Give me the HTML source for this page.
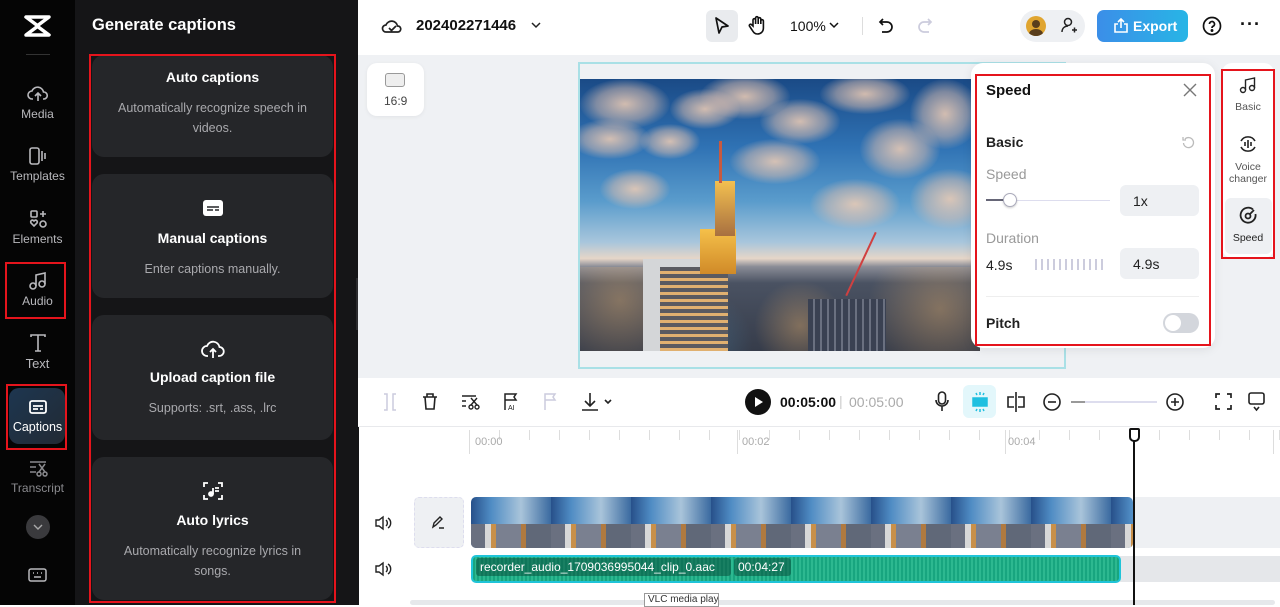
<!DOCTYPE html><html><head><meta charset="utf-8"><style>
*{box-sizing:border-box;margin:0;padding:0}
body{width:1280px;height:605px;overflow:hidden;font-family:"Liberation Sans",sans-serif;background:#fff;position:relative}
.a{position:absolute}
.lb{left:0;top:0;width:75px;height:605px;background:#050505}
.ni{position:absolute;left:0;width:75px;text-align:center;color:#b9b9bd;font-size:12px}
.ni svg{display:block;margin:0 auto 3px}
.pn{left:75px;top:0;width:284px;height:605px;background:#151517}
.card{position:absolute;left:92px;width:241px;background:#252629;border-radius:12px;color:#fff;text-align:center}
.card b{display:block;font-size:14px}
.card p{color:#a9a9ad;font-size:12.5px;line-height:20px;margin-top:8px}
.red{position:absolute;border:2px solid #e5141c}
.top{left:358px;top:0;width:922px;height:55px;background:#fff}
.cv{left:358px;top:55px;width:922px;height:323px;background:#eff1f4}
.tb{left:358px;top:378px;width:922px;height:49px;background:#fff;border-bottom:1px solid #e8e9ec}
svg{overflow:visible}
.cl{position:absolute;border-radius:50%;background:radial-gradient(ellipse,rgba(240,205,180,.85) 0,rgba(220,190,175,.5) 45%,transparent 72%)}
</style></head><body>
<div class="a lb"></div>
<svg class="a" style="left:24px;top:14px" width="27" height="24" viewBox="0 0 27 24"><path d="M2 3h23L13 12 25 21H2L14 12Z" fill="none" stroke="#fff" stroke-width="3.5" stroke-linejoin="round"/></svg>
<div class="a" style="left:26px;top:54px;width:24px;height:1px;background:#333"></div>
<div class="ni" style="top:84px"><svg width="22" height="20" viewBox="0 0 22 20" fill="none" stroke="#b9b9bd" stroke-width="1.6"><path d="M6 15H5a4 4 0 0 1 0-8 6 6 0 0 1 11.5 1A3.5 3.5 0 0 1 17 15h-1M11 17V10M8 12l3-3 3 3"/></svg>Media</div>
<div class="ni" style="top:146px"><svg width="22" height="20" viewBox="0 0 22 20" fill="none" stroke="#b9b9bd" stroke-width="1.6"><rect x="3" y="2" width="9" height="16" rx="2"/><path d="M15 5v10M18 7v6"/></svg>Templates</div>
<div class="ni" style="top:209px"><svg width="22" height="20" viewBox="0 0 22 20" fill="none" stroke="#b9b9bd" stroke-width="1.6"><rect x="4" y="2" width="6" height="6" rx="1"/><path d="M16 2v6M13 5h6M7 12c-2-2-4 0-3 2l3 3 3-3c1-2-1-4-3-2z"/><circle cx="16" cy="15" r="3"/></svg>Elements</div>
<div class="ni" style="top:271px"><svg width="22" height="20" viewBox="0 0 22 20" fill="none" stroke="#b9b9bd" stroke-width="1.6"><circle cx="6" cy="15" r="3"/><circle cx="15" cy="13" r="3"/><path d="M9 15V4l9-2v11"/></svg>Audio</div>
<div class="red" style="left:5px;top:262px;width:61px;height:57px"></div>
<div class="ni" style="top:333px;font-size:13px"><svg width="22" height="20" viewBox="0 0 22 20" fill="none" stroke="#b9b9bd" stroke-width="1.6"><path d="M4 4V2h14v2M11 2v16M8 18h6"/></svg>Text</div>
<div class="a" style="left:9px;top:388px;width:56px;height:56px;border-radius:10px;background:linear-gradient(135deg,#1d3650,#222a34)"></div>
<div class="ni" style="top:397px;color:#fff;font-size:12.5px"><svg width="22" height="20" viewBox="0 0 22 20" fill="none" stroke="#fff" stroke-width="1.8"><rect x="3" y="4" width="16" height="12" rx="2"/><path d="M6 9h10M6 12h5M13 12h3"/></svg>Captions</div>
<div class="red" style="left:6px;top:384px;width:61px;height:66px"></div>
<div class="ni" style="top:458px;color:#8a8a8e"><svg width="22" height="20" viewBox="0 0 22 20" fill="none" stroke="#8a8a8e" stroke-width="1.5"><path d="M3 4h16M3 9h6M3 14h6M12 6l6 8M18 6l-6 8"/><circle cx="12" cy="16" r="2"/><circle cx="18" cy="16" r="2"/></svg>Transcript</div>
<div class="a" style="left:26px;top:515px;width:24px;height:24px;border-radius:50%;background:#3a3a3d"></div>
<svg class="a" style="left:33px;top:524px" width="10" height="6"><path d="M1 1l4 4 4-4" stroke="#aaa" fill="none" stroke-width="1.4"/></svg>
<svg class="a" style="left:28px;top:568px" width="19" height="15" fill="none" stroke="#b9b9bd" stroke-width="1.5"><rect x="1" y="1" width="17" height="12" rx="2"/><path d="M5 5h1M9 5h1M13 5h1M6 9h7"/></svg>

<div class="a pn"></div>
<div class="a" style="left:92px;top:16px;color:#fff;font-size:16.5px;font-weight:bold">Generate captions</div>
<div class="card" style="top:55px;height:102px;padding-top:14px"><b>Auto captions</b><p style="margin-top:13px">Automatically recognize speech in<br>videos.</p></div>
<div class="card" style="top:174px;height:124px;padding-top:26px"><svg width="22" height="16" viewBox="0 0 22 16" style="display:block;margin:0 auto 14px"><rect x="1" y="0" width="20" height="16" rx="3" fill="#fff"/><path d="M5 7h12M5 10h6M13 10h4" stroke="#252629" stroke-width="1.6"/></svg><b>Manual captions</b><p style="margin-top:13px">Enter captions manually.</p></div>
<div class="card" style="top:315px;height:125px;padding-top:24px"><svg width="24" height="20" viewBox="0 0 24 20" fill="none" stroke="#fff" stroke-width="1.8" style="display:block;margin:0 auto 10px"><path d="M7 17H6a5 5 0 0 1 0-10 6.5 6.5 0 0 1 12.5 1A4.5 4.5 0 0 1 18 17h-1M12 19v-9M9 13l3-3 3 3"/></svg><b>Upload caption file</b><p style="margin-top:13px">Supports: .srt, .ass, .lrc</p></div>
<div class="card" style="top:457px;height:143px;padding-top:23px"><svg width="22" height="22" viewBox="0 0 22 22" fill="none" stroke="#fff" stroke-width="1.8" style="display:block;margin:0 auto 10px"><path d="M2 7V3h4M16 3h4v4M20 15v4h-4M6 19H2v-4M11 8v6M13 8h4M13 11h4"/><circle cx="9" cy="14" r="2" fill="#fff"/></svg><b>Auto lyrics</b><p style="margin-top:13px">Automatically recognize lyrics in<br>songs.</p></div>
<div class="red" style="left:89px;top:54px;width:247px;height:549px"></div>
<div class="a" style="left:356px;top:278px;width:10px;height:52px;border-radius:0 6px 6px 0;background:#2b2b2e"></div>

<div class="a top"></div>
<svg class="a" style="left:382px;top:17px" width="20" height="18" fill="none" stroke="#222" stroke-width="1.7"><path d="M5 15H4a3.5 3.5 0 0 1 0-7 6 6 0 0 1 11.5 1A3 3 0 0 1 16 15zM7 11l2.5 2.5L14 9"/></svg>
<div class="a" style="left:416px;top:17px;font-size:15px;font-weight:bold;color:#111">202402271446</div>
<svg class="a" style="left:531px;top:22px" width="10" height="6"><path d="M1 1l4 4 4-4" stroke="#222" fill="none" stroke-width="1.5"/></svg>
<div class="a" style="left:706px;top:10px;width:32px;height:32px;border-radius:6px;background:#e9ebee"></div>
<svg class="a" style="left:714px;top:16px" width="16" height="20" fill="none" stroke="#111" stroke-width="1.7"><path d="M2 2l12 8-6 1-3 6z" stroke-linejoin="round"/></svg>
<svg class="a" style="left:748px;top:15px" width="18" height="20" fill="none" stroke="#111" stroke-width="1.6"><path d="M5 11V5a1.3 1.3 0 0 1 2.6 0v4V3a1.3 1.3 0 0 1 2.6 0v6V4a1.3 1.3 0 0 1 2.6 0v5V6a1.3 1.3 0 0 1 2.6 0v7c0 4-3 6-6 6s-4-2-6-5l-2-3a1.3 1.3 0 0 1 2-1.5z"/></svg>
<div class="a" style="left:790px;top:18px;font-size:14px;color:#111">100%</div>
<svg class="a" style="left:829px;top:22px" width="10" height="6"><path d="M1 1l4 4 4-4" stroke="#111" fill="none" stroke-width="1.5"/></svg>
<div class="a" style="left:862px;top:17px;width:1px;height:18px;background:#ddd"></div>
<svg class="a" style="left:878px;top:17px" width="16" height="18" fill="none" stroke="#111" stroke-width="1.7"><path d="M5 2L2 5l3 3M2 5h7a5 5 0 0 1 0 10H4"/></svg>
<svg class="a" style="left:917px;top:17px" width="16" height="18" fill="none" stroke="#ccd" stroke-width="1.7"><path d="M11 2l3 3-3 3M14 5H7a5 5 0 0 0 0 10h5"/></svg>
<div class="a" style="left:1020px;top:10px;width:65px;height:32px;border-radius:16px;background:#eef0f3"></div>
<div class="a" style="left:1026px;top:16px;width:20px;height:20px;border-radius:50%;background:#e0a530;overflow:hidden"><div class="a" style="left:6px;top:4px;width:8px;height:8px;border-radius:50%;background:#5a3e1c"></div><div class="a" style="left:3px;top:13px;width:14px;height:10px;border-radius:50%;background:#5a3e1c"></div></div>
<svg class="a" style="left:1061px;top:17px" width="17" height="17" fill="none" stroke="#222" stroke-width="1.5"><circle cx="7" cy="5" r="3.5"/><path d="M1 15c0-4 3-6 6-6M11 13h5M13.5 10.5v5"/></svg>
<div class="a" style="left:1097px;top:10px;width:91px;height:32px;border-radius:7px;background:linear-gradient(90deg,#3b8ee8,#28b5e6);color:#fff;font-size:14px;font-weight:bold;padding:8px 0 0 36px">Export</div>
<svg class="a" style="left:1114px;top:18px" width="14" height="15" fill="none" stroke="#fff" stroke-width="1.6"><path d="M4 6H1v8h12V6h-3M7 10V1M4 4l3-3 3 3"/></svg>
<svg class="a" style="left:1202px;top:16px" width="20" height="20" fill="none" stroke="#111" stroke-width="1.7"><circle cx="10" cy="10" r="8.5"/><path d="M7.5 8a2.5 2.5 0 1 1 3.5 2.3c-.8.4-1 .9-1 1.7"/><circle cx="10" cy="14.5" r=".6" fill="#111"/></svg>
<div class="a" style="left:1240px;top:14px;font-size:18px;font-weight:bold;color:#111;letter-spacing:1px">···</div>

<div class="a cv"></div>
<div class="a" style="left:367px;top:63px;width:57px;height:53px;border-radius:10px;background:#fff;box-shadow:0 1px 4px rgba(0,0,0,.06)"></div>
<div class="a" style="left:385px;top:73px;width:20px;height:14px;border:1.5px solid #999;border-radius:3px;background:#eee"></div>
<div class="a" style="left:384px;top:94px;font-size:12px;color:#444">16:9</div>
<div class="a" style="left:578px;top:62px;width:488px;height:307px;border:2px solid #a9e0e6"></div>
<div class="a" style="left:580px;top:79px;width:400px;height:272px;overflow:hidden;background:linear-gradient(180deg,#1a4a86 0%,#2f72b4 25%,#5a9ccc 45%,#a8c6dc 60%,#e6d6c8 66%,#8a8c96 69%,#4a5262 75%,#363c4a 100%)">
<div class="cl" style="left:0;top:0;width:90px;height:50px"></div>
<div class="cl" style="left:-10px;top:40px;width:80px;height:40px"></div>
<div class="cl" style="left:90px;top:10px;width:70px;height:40px"></div>
<div class="cl" style="left:120px;top:-5px;width:90px;height:45px"></div>
<div class="cl" style="left:180px;top:20px;width:80px;height:45px"></div>
<div class="cl" style="left:240px;top:-5px;width:90px;height:40px"></div>
<div class="cl" style="left:280px;top:40px;width:80px;height:60px"></div>
<div class="cl" style="left:330px;top:0;width:70px;height:70px"></div>
<div class="cl" style="left:150px;top:60px;width:90px;height:45px"></div>
<div class="cl" style="left:20px;top:90px;width:70px;height:40px"></div>
<div class="cl" style="left:230px;top:100px;width:90px;height:50px"></div>
<div class="cl" style="left:330px;top:90px;width:80px;height:60px"></div>
<div class="cl" style="left:60px;top:45px;width:60px;height:35px"></div>
<div class="a" style="left:0;top:188px;width:400px;height:84px;background:radial-gradient(circle at 10% 40%,rgba(255,190,110,.35) 0,transparent 20%),radial-gradient(circle at 55% 70%,rgba(255,190,110,.35) 0,transparent 20%),radial-gradient(circle at 90% 50%,rgba(255,190,110,.35) 0,transparent 20%),radial-gradient(circle at 30% 90%,rgba(70,110,140,.6) 0,transparent 18%)"></div>
<div class="a" style="left:63px;top:180px;width:85px;height:92px;background:#d4d6d8"></div>
<div class="a" style="left:80px;top:188px;width:68px;height:84px;background:repeating-linear-gradient(0deg,#e0b070 0 3px,#5a5a60 3px 7px)"></div>
<div class="a" style="left:120px;top:150px;width:36px;height:45px;background:linear-gradient(#f5c04a,#d08a28)"></div>
<div class="a" style="left:135px;top:102px;width:20px;height:55px;background:linear-gradient(#f3c050,#a87040)"></div>
<div class="a" style="left:139px;top:62px;width:3px;height:42px;background:#c85a40"></div>
<div class="a" style="left:228px;top:220px;width:78px;height:52px;background:repeating-linear-gradient(90deg,#3a4152 0 5px,#6a7080 5px 7px)"></div>
<div class="a" style="left:280px;top:150px;width:2px;height:70px;background:#d04040;transform:rotate(25deg)"></div>
</div>

<div class="a" style="left:971px;top:63px;width:244px;height:285px;border-radius:12px;background:#fff;box-shadow:0 2px 10px rgba(0,0,0,.08)"></div>
<div class="red" style="left:975px;top:74px;width:236px;height:272px"></div>
<div class="a" style="left:986px;top:82px;font-size:15px;font-weight:bold;color:#111">Speed</div>
<svg class="a" style="left:1184px;top:84px" width="12" height="12" stroke="#777" stroke-width="1.4"><path d="M0 0l12 12M12 0L0 12"/></svg>
<div class="a" style="left:986px;top:134px;font-size:14px;font-weight:bold;color:#222">Basic</div>
<svg class="a" style="left:1182px;top:136px" width="13" height="13" fill="none" stroke="#bbb" stroke-width="1.3"><path d="M3 3a5 5 0 1 1-1.5 4M1 1v3h3"/></svg>
<div class="a" style="left:986px;top:166px;font-size:14px;color:#999">Speed</div>
<div class="a" style="left:986px;top:200px;width:124px;height:1px;background:#dde"></div>
<div class="a" style="left:986px;top:199px;width:24px;height:2px;background:#667"></div>
<div class="a" style="left:1003px;top:193px;width:14px;height:14px;border-radius:50%;background:#fff;border:1px solid #aab;box-shadow:0 1px 2px rgba(0,0,0,.2)"></div>
<div class="a" style="left:1120px;top:185px;width:79px;height:31px;border-radius:6px;background:#eef0f3;font-size:14px;color:#222;padding:8px 0 0 13px">1x</div>
<div class="a" style="left:986px;top:230px;font-size:14px;color:#999">Duration</div>
<div class="a" style="left:986px;top:257px;font-size:14px;color:#222">4.9s</div>
<div class="a" style="left:1035px;top:259px;width:70px;height:11px;background:repeating-linear-gradient(90deg,#ccd 0 2px,transparent 2px 6px)"></div>
<div class="a" style="left:1120px;top:248px;width:79px;height:31px;border-radius:6px;background:#eef0f3;font-size:14px;color:#222;padding:8px 0 0 13px">4.9s</div>
<div class="a" style="left:986px;top:296px;width:213px;height:1px;background:#eee"></div>
<div class="a" style="left:986px;top:315px;font-size:14px;font-weight:bold;color:#222">Pitch</div>
<div class="a" style="left:1163px;top:313px;width:36px;height:20px;border-radius:10px;background:#d3d6dc"></div>
<div class="a" style="left:1165px;top:315px;width:16px;height:16px;border-radius:50%;background:#fff"></div>

<div class="a" style="left:1222px;top:63px;width:52px;height:195px;border-radius:10px;background:#fff"></div>
<div class="a" style="left:1225px;top:198px;width:47px;height:56px;border-radius:6px;background:#eef0f3"></div>
<svg class="a" style="left:1239px;top:77px" width="18" height="17" fill="none" stroke="#222" stroke-width="1.4"><circle cx="4" cy="13" r="2.5"/><circle cx="13" cy="11" r="2.5"/><path d="M6.5 13V3l9-2v10"/></svg>
<div class="a" style="left:1222px;top:101px;width:52px;text-align:center;font-size:10.5px;color:#555">Basic</div>
<svg class="a" style="left:1238px;top:135px" width="20" height="18" fill="none" stroke="#222" stroke-width="1.6"><path d="M3 6a8 8 0 0 1 14 0M3 12a8 8 0 0 0 14 0M7 7v4M10 5v8M13 7v4"/></svg>
<div class="a" style="left:1222px;top:161px;width:52px;text-align:center;font-size:10.5px;color:#555;line-height:12px">Voice<br>changer</div>
<svg class="a" style="left:1239px;top:206px" width="18" height="18" fill="none" stroke="#222" stroke-width="1.8"><path d="M14 3.5A7.5 7.5 0 1 0 16.5 8"/><circle cx="9" cy="10" r="2.5"/><path d="M10.5 8.5L15 4"/></svg>
<div class="a" style="left:1222px;top:232px;width:52px;text-align:center;font-size:10.5px;color:#222">Speed</div>
<div class="red" style="left:1221px;top:69px;width:54px;height:190px"></div>

<div class="a tb"></div>
<svg class="a" style="left:382px;top:393px" width="16" height="18" fill="none" stroke="#ccd" stroke-width="1.5"><path d="M2 1h3v16H2M14 1h-3v16h3"/></svg>
<svg class="a" style="left:422px;top:393px" width="16" height="17" fill="none" stroke="#222" stroke-width="1.6"><path d="M1 4h14M5 4V1h6v3M3 4l1 12h8l1-12"/></svg>
<svg class="a" style="left:461px;top:394px" width="20" height="16" fill="none" stroke="#222" stroke-width="1.4"><path d="M1 2h14M1 7h4M1 12h4M10 4l6 7M16 4l-6 7"/><circle cx="10" cy="13" r="2"/><circle cx="16" cy="13" r="2"/></svg>
<svg class="a" style="left:503px;top:393px" width="16" height="18" fill="none" stroke="#222" stroke-width="1.5"><path d="M2 17V1h11l-2 3 2 3H2"/><text x="5" y="17" font-size="7" fill="#222" stroke="none" font-family="Liberation Sans">AI</text></svg>
<svg class="a" style="left:543px;top:393px" width="14" height="18" fill="none" stroke="#ccd" stroke-width="1.5"><path d="M2 17V1h10l-2 3 2 3H2"/></svg>
<svg class="a" style="left:581px;top:392px" width="34" height="20" fill="none" stroke="#222" stroke-width="1.6"><path d="M9 1v13M4 9l5 5 5-5M1 18h16M24 8l3 3 3-3"/></svg>
<div class="a" style="left:745px;top:389px;width:26px;height:26px;border-radius:50%;background:#111"></div>
<svg class="a" style="left:755px;top:397px" width="8" height="10"><path d="M0 0l8 5-8 5z" fill="#fff"/></svg>
<div class="a" style="left:780px;top:394px;font-size:14px;font-weight:bold;color:#111">00:05:00</div>
<div class="a" style="left:839px;top:393px;font-size:14px;color:#ccc">|</div>
<div class="a" style="left:849px;top:394px;font-size:14px;color:#aaa">00:05:00</div>
<svg class="a" style="left:935px;top:391px" width="14" height="21" fill="none" stroke="#222" stroke-width="1.6"><rect x="3.5" y="1" width="7" height="12" rx="3.5"/><path d="M1 9a6 6 0 0 0 12 0M7 15v5"/></svg>
<div class="a" style="left:963px;top:385px;width:33px;height:33px;border-radius:6px;background:#e3f7fb"></div>
<svg class="a" style="left:970px;top:392px" width="20" height="20" stroke="#1fbfe0" stroke-width="1.5"><rect x="3" y="6" width="14" height="8" fill="#1fbfe0"/><path d="M10 0v3M6 1l1 2M14 1l-1 2M10 17v3M6 19l1-2M14 19l-1-2"/></svg>
<svg class="a" style="left:1006px;top:392px" width="20" height="20" fill="none" stroke="#222" stroke-width="1.6"><path d="M10 0v20M8 5H2v10h6M12 5h6v10h-6"/></svg>
<svg class="a" style="left:1043px;top:393px" width="18" height="18" fill="none" stroke="#222" stroke-width="1.6"><circle cx="9" cy="9" r="8"/><path d="M5 9h8"/></svg>
<div class="a" style="left:1071px;top:401px;width:86px;height:2px;background:#dde"></div>
<div class="a" style="left:1071px;top:401px;width:14px;height:2px;background:#999"></div>
<svg class="a" style="left:1166px;top:393px" width="18" height="18" fill="none" stroke="#222" stroke-width="1.6"><circle cx="9" cy="9" r="8"/><path d="M5 9h8M9 5v8"/></svg>
<svg class="a" style="left:1215px;top:393px" width="17" height="17" fill="none" stroke="#222" stroke-width="1.7"><path d="M1 5V1h4M12 1h4v4M16 12v4h-4M5 16H1v-4"/></svg>
<svg class="a" style="left:1248px;top:392px" width="17" height="19" fill="none" stroke="#222" stroke-width="1.6"><rect x="1" y="1" width="15" height="11" rx="2"/><path d="M6 15l2.5 3 2.5-3"/></svg>

<div class="a" style="left:469px;top:430px;width:811px;height:10px;background:repeating-linear-gradient(90deg,#ddd 0 1px,transparent 1px 30px)"></div>
<div class="a" style="left:469px;top:430px;width:1px;height:24px;background:#ddd"></div>
<div class="a" style="left:737px;top:430px;width:1px;height:24px;background:#ddd"></div>
<div class="a" style="left:1005px;top:430px;width:1px;height:24px;background:#ddd"></div>
<div class="a" style="left:1273px;top:430px;width:1px;height:24px;background:#ddd"></div>
<div class="a" style="left:475px;top:436px;font-size:11px;color:#aaa">00:00</div>
<div class="a" style="left:742px;top:436px;font-size:11px;color:#aaa">00:02</div>
<div class="a" style="left:1008px;top:436px;font-size:11px;color:#aaa">00:04</div>

<svg class="a" style="left:375px;top:516px" width="16" height="14" fill="none" stroke="#222" stroke-width="1.4"><path d="M1 4h3l4-3v12l-4-3H1zM11 4a4 4 0 0 1 0 6M13 2a6 6 0 0 1 0 10"/></svg>
<svg class="a" style="left:375px;top:562px" width="16" height="14" fill="none" stroke="#222" stroke-width="1.4"><path d="M1 4h3l4-3v12l-4-3H1zM11 4a4 4 0 0 1 0 6M13 2a6 6 0 0 1 0 10"/></svg>
<div class="a" style="left:414px;top:497px;width:50px;height:51px;border-radius:5px;background:#eef0f3;border:1px dashed #dde"></div>
<svg class="a" style="left:431px;top:515px" width="14" height="14" fill="none" stroke="#222" stroke-width="1.4"><path d="M2 12l1-4 6-6 2 2-6 6zM8 13h5"/></svg>
<div class="a" style="left:1133px;top:497px;width:147px;height:51px;background:#eef0f3"></div>
<div class="a" style="left:471px;top:497px;width:662px;height:51px;border-radius:5px;overflow:hidden;background:repeating-linear-gradient(90deg,#27508a 0,#4f8cc4 20px,#a9c4da 50px,#3a6aa0 80px);"><div class="a" style="left:0;top:27px;width:662px;height:24px;background:repeating-linear-gradient(90deg,#6a7080 0 14px,#d8d8d8 14px 20px,#c8904a 20px 25px,#7a8090 25px 50px,#b07a40 50px 55px,#606878 55px 80px)"></div></div>
<div class="a" style="left:1120px;top:556px;width:160px;height:26px;background:#e5e7ea"></div>
<div class="a" style="left:471px;top:555px;width:650px;height:28px;border-radius:5px;background:repeating-linear-gradient(90deg,#18a57f 0 2px,#2db890 2px 4px);border:2px solid #20c4d8"></div>
<div class="a" style="left:476px;top:558px;width:255px;height:18px;background:rgba(10,80,60,.55);border-radius:3px;color:#fff;font-size:12px;padding:2px 0 0 4px">recorder_audio_1709036995044_clip_0.aac</div>
<div class="a" style="left:734px;top:558px;width:57px;height:18px;background:rgba(10,80,60,.55);border-radius:3px;color:#fff;font-size:12px;padding:2px 0 0 4px">00:04:27</div>
<div class="a" style="left:410px;top:600px;width:865px;height:5px;background:#e6e8eb;border-radius:3px"></div>
<div class="a" style="left:644px;top:593px;width:75px;height:14px;background:#fff;border:1px solid #999;font-size:10px;color:#333;padding-left:3px;white-space:nowrap;overflow:hidden">VLC media player</div>
<div class="a" style="left:1133px;top:440px;width:2px;height:165px;background:#111"></div>
<div class="a" style="left:1129px;top:428px;width:11px;height:14px;border:2px solid #111;border-radius:2px 2px 5px 5px;background:#fff"></div>
</body></html>
